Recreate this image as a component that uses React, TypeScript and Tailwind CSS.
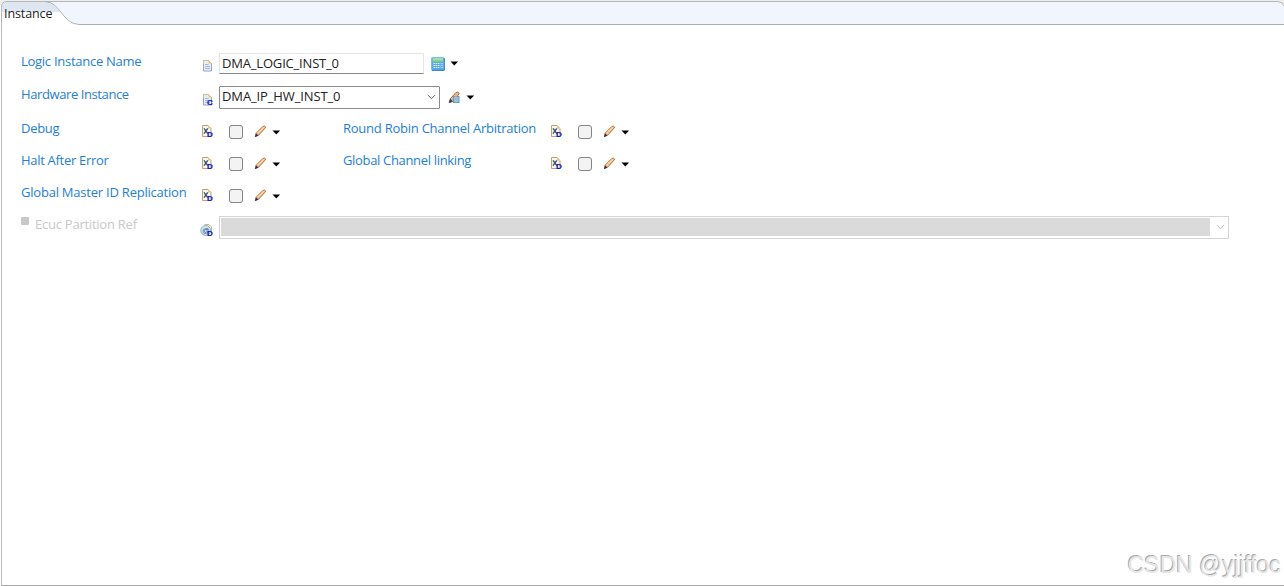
import type { ReactNode } from "react";
import clsx from "clsx";

type Badge = "C" | "D";

function BadgeLetter({ letter }: { letter: Badge }) {
  return (
    <text
      x="6"
      y="12"
      fontSize="8"
      fontWeight="700"
      fontFamily="Liberation Sans, sans-serif"
      fill="#1414b8"
      stroke="#1414b8"
      strokeWidth="0.2"
    >
      {letter}
    </text>
  );
}

function DocIcon({ badge }: { badge?: Badge }) {
  return (
    <svg width="13" height="13" viewBox="0 0 13 13" className="shrink-0 overflow-visible">
      <path d="M2.500 1.500h5l3 3v7.500h-8z" fill="#e6eefb" stroke="#98a3bd" />
      <path d="M2.500 5v-3.500h5l3 3" fill="none" stroke="#d3bf86" />
      <path d="M7.500 1.500v3h3z" fill="#e4c67a" />
      <path d="M4 5.500h3.500M4 7.500h5M4 9.500h5" stroke="#9fb6de" />
      {badge && <BadgeLetter letter={badge} />}
    </svg>
  );
}

function XIcon() {
  return (
    <svg width="13" height="13" viewBox="0 0 13 13" className="shrink-0 overflow-visible">
      <path d="M1.500 .5h5.500l3 3v8h-8.500z" fill="#f8f6ee" stroke="#bba468" />
      <path d="M7 .5v3h3z" fill="#e4c67a" />
      <path d="M3 3.300l3.800 5.400M6.800 3.300l-3.800 5.400" stroke="#3c5578" strokeWidth="1.400" />
      <BadgeLetter letter="D" />
    </svg>
  );
}

function RefIcon() {
  return (
    <svg width="13" height="13" viewBox="0 0 13 13" className="shrink-0 overflow-visible">
      <path d="M3.500 .5h4.500l2.500 2.500v6" fill="#f8f6ee" stroke="#c9b77f" />
      <circle cx="4.700" cy="6.500" r="4.900" fill="#d3e6f4" stroke="#6f9cc2" strokeWidth=".8" />
      <text x="1.200" y="8.800" fontSize="7" fontFamily="Liberation Sans, sans-serif" fill="#1f5685">
        @
      </text>
      <BadgeLetter letter="D" />
    </svg>
  );
}

function CalculatorIcon() {
  return (
    <svg width="14" height="14" viewBox="0 0 14 14" className="shrink-0">
      <rect x=".5" y=".5" width="12.500" height="13" rx=".8" fill="#5aaaf0" stroke="#7fbdf0" />
      <path d="M1 13.300h12.300V1" fill="none" stroke="#3478c4" />
      <rect x="1.500" y="1.500" width="10.500" height="3.300" fill="#7fd48a" />
      <path d="M2 2h10" stroke="#c9f0c0" />
      <path d="M2.500 6.500h6M2.500 8.500h6M2.500 10.500h6" stroke="#e8f5ff" strokeDasharray="1.500 .7" />
      <path d="M9.500 6.500h2.500M9.500 8.500h2.500M9.500 10.500h2.500" stroke="#a5d3f8" />
    </svg>
  );
}

function PencilIcon() {
  return (
    <svg width="13" height="13" viewBox="0 0 13 13" className="shrink-0">
      <path d="M2 8.300L8.900 1.400Q10.500.3 11.800 2.300L4.700 10.200 1.200 11.700z" fill="#efb577" stroke="#a06f48" strokeWidth=".9" />
      <path d="M3.500 8.500L9.900 2.200" stroke="#ffd29a" strokeWidth="1.500" />
      <path d="M1 12l1-3.600 2.500 2.100z" fill="#29305e" />
    </svg>
  );
}

function PencilBoxIcon() {
  return (
    <svg width="13" height="13" viewBox="0 0 13 13" className="shrink-0">
      <path d="M2.500 7.500L8 1.500Q10 .2 11.300 2.500L5 10.500 1.500 11.500z" fill="#f2b478" stroke="#94643e" strokeWidth=".9" />
      <path d="M.5 12l1.800-4.500 2.500 3z" fill="#343b60" />
      <rect x="5.500" y="5.500" width="5.500" height="6" fill="#8cc8ee" stroke="#5e9cc6" />
      <path d="M6 6.500L8.500 5.500" stroke="#edb075" />
      <path d="M8.300 6.500v5M6 8.500h4.500" stroke="#c3a9a6" strokeWidth=".6" />
    </svg>
  );
}

function Caret({ className }: { className?: string }) {
  return (
    <svg width="9" height="5" viewBox="0 0 9 5" className={clsx("shrink-0", className)}>
      <path d="M.5.400h7.600L4.300 4.600z" fill="#000" />
    </svg>
  );
}

function Chevron({ className }: { className?: string }) {
  return (
    <svg width="9" height="6" viewBox="0 0 9 6" className={clsx("shrink-0", className)}>
      <path d="M.8 1l3.700 3.700L8.200 1" fill="none" stroke="currentColor" />
    </svg>
  );
}

function Label({ className, children }: { className?: string; children: ReactNode }) {
  return <div className={clsx("shrink-0 whitespace-nowrap text-[#1c80da]", className)}>{children}</div>;
}

function Flag() {
  return (
    <div className="flex shrink-0 items-center pt-px">
      <XIcon />
      <span className="ml-[15px] size-[14px] rounded-[3px] border border-[#858585] bg-[#f3f3f3]" />
      <span className="ml-[11px] flex">
        <PencilIcon />
      </span>
      <Caret className="ml-[5px] mt-px" />
    </div>
  );
}

export default function App() {
  return (
    <div className="flex h-[586px] w-[1284px] flex-col overflow-hidden bg-white font-['Open_Sans','Noto_Sans',sans-serif] text-[13px] leading-[18px]">
      {/* Tab bar */}
      <div className="relative h-[25px] shrink-0">
        <svg width="1284" height="25" viewBox="0 0 1284 25" className="absolute inset-0">
          <path d="M0 0h1284v5H0z" fill="#eeeeec" />
          <path d="M1.500 25V7Q1.500 1.500 7 1.500H1278Q1283.500 2 1284 6V24.500H79C64 24 62 2 45 1.500z" fill="#f1f6fe" />
          <path d="M2 12V7Q2 2 7 2H45C53 2 56 7 60 12z" fill="#dee7f1" />
          <path d="M2 12H60C65 18 68 24 79 24V25H2z" fill="#fff" />
          <path d="M1.500 25V7Q1.500 1.500 7 1.500H1278Q1283 2 1284 6" fill="none" stroke="#b5b7b9" />
          <path d="M45 1.500C61 2 62 24 79 24.500H1284" fill="none" stroke="#acafb3" />
        </svg>
        <span className="relative block pl-[4px] pt-[5px] text-[12.500px] tracking-[-0.1px] text-[#222]">Instance</span>
      </div>

      {/* Form */}
      <div className="ml-px flex grow flex-col border-b border-l border-b-[#aaa] border-l-[#b9b9b9] pl-[19px] pt-[22px]">
        <div className="flex h-[33px] items-center">
          <Label className="w-[180px] pb-[5px] tracking-[-0.27px]">Logic Instance Name</Label>
          <span className="flex pt-[3px]">
            <DocIcon />
          </span>
          <div className="ml-[5px] flex h-[21px] w-[205px] items-center border border-[#e5e5e5] border-b-[#888] pb-[2px] pl-[2px] tracking-[-0.18px] text-[#222]">
            DMA_LOGIC_INST_0
          </div>
          <span className="ml-[7px] flex">
            <CalculatorIcon />
          </span>
          <Caret className="ml-[5px]" />
        </div>

        <div className="flex h-[34px] items-center">
          <Label className="w-[180px] pb-[6px] tracking-[-0.4px]">Hardware Instance</Label>
          <span className="flex pt-[5px]">
            <DocIcon badge="C" />
          </span>
          <div className="ml-[5px] flex h-[23px] w-[221px] items-center justify-between rounded-[1px] border border-[#8b8b8b] pb-[2px] pl-[2px] pr-[3px] tracking-[-0.12px] text-[#222]">
            DMA_IP_HW_INST_0
            <Chevron className="mt-[2px] text-[#666]" />
          </div>
          <span className="ml-[8px] flex">
            <PencilBoxIcon />
          </span>
          <Caret className="ml-[5px]" />
        </div>

        <div className="mt-px flex h-8 items-center">
          <Label className="w-[180px] pb-[7px] tracking-[-0.3px]">Debug</Label>
          <Flag />
          <Label className="ml-[62px] w-[207px] pb-[7px] tracking-[-0.24px]">Round Robin Channel Arbitration</Label>
          <Flag />
        </div>

        <div className="flex h-8 items-center">
          <Label className="w-[180px] pb-[7px] tracking-[-0.3px]">Halt After Error</Label>
          <Flag />
          <Label className="ml-[62px] w-[207px] pb-[7px] tracking-[-0.33px]">Global Channel linking</Label>
          <Flag />
        </div>

        <div className="flex h-8 items-center">
          <Label className="w-[180px] pb-[7px] tracking-[-0.22px]">Global Master ID Replication</Label>
          <Flag />
        </div>

        <div className="mt-px flex h-[30px] items-center">
          <div className="flex w-[180px] shrink-0 items-center pb-[7px] tracking-[-0.24px] text-[#c8c8c8]">
            <span className="mb-[5px] mr-[6px] size-2 rounded-[1px] bg-[#c8c8c8]" />
            Ecuc Partition Ref
          </div>
          <span className="flex pt-[6px]">
            <RefIcon />
          </span>
          <div className="ml-[5px] flex h-[23px] w-[1010px] items-center border border-[#d4d4d4] pl-px">
            <div className="h-[18px] grow bg-[#dadada]" />
            <Chevron className="ml-[6px] mr-[3px] text-[#bbb]" />
          </div>
        </div>

        {/* Watermark */}
        <div className="mb-[5px] mr-[3px] mt-auto text-right font-['Liberation_Sans',sans-serif] text-[23px] leading-[30px] text-[#e6e6e6] [text-shadow:-1px_-1px_0_#a8a8a8]">
          CSDN @yjjffoc
        </div>
      </div>
    </div>
  );
}
